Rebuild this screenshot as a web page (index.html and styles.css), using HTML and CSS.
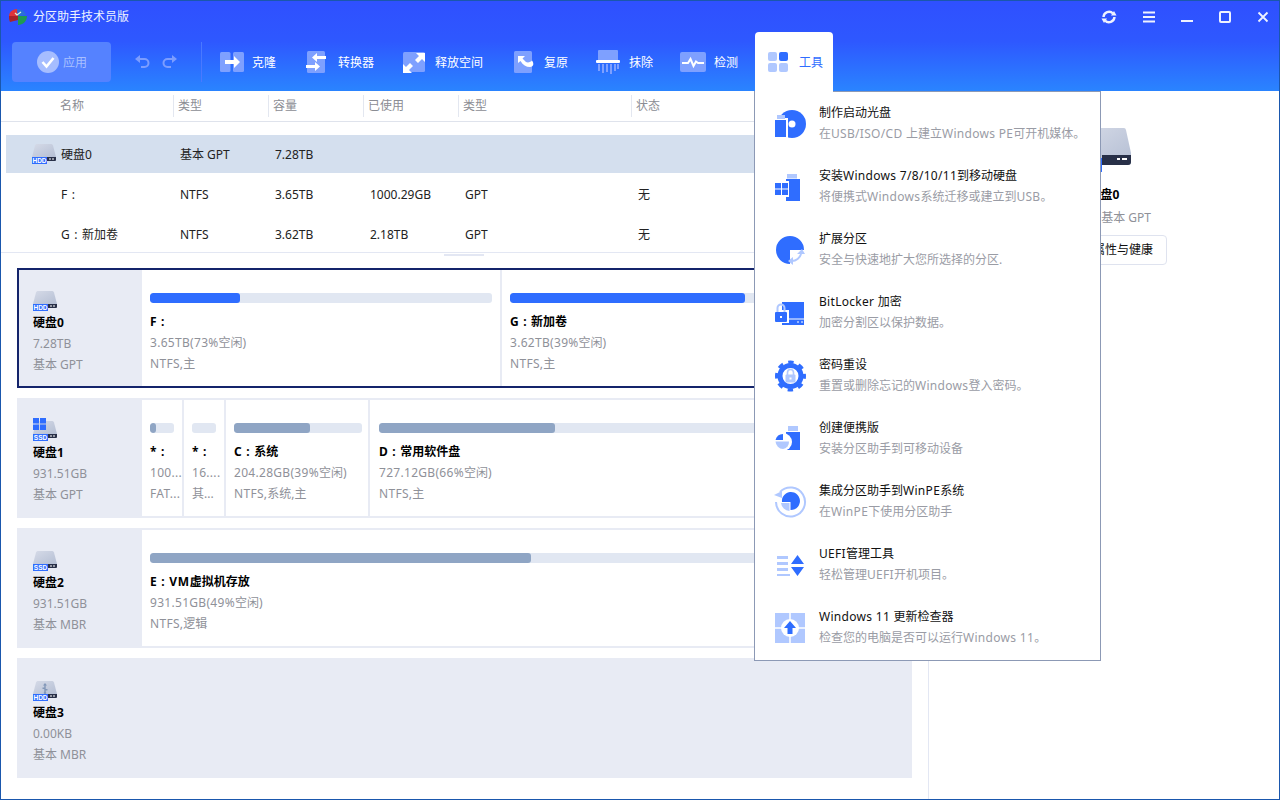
FILE: index.html
```html
<!DOCTYPE html>
<html lang="zh">
<head>
<meta charset="utf-8">
<title>分区助手技术员版</title>
<link rel="stylesheet" href="styles.css">
</head>
<body>
<svg class="defs" width="0" height="0">
  <defs>
    <linearGradient id="dg" x1="0" y1="0" x2="1" y2="1"><stop offset="0" stop-color="#d6dbe8"/><stop offset="1" stop-color="#b4bed3"/></linearGradient>
    <symbol id="body" viewBox="0 0 24 20">
      <path d="M4.500 0H19.500Q20.500 0 21 1.500L24 13H0L3 1.500Q3.500 0 4.500 0Z" fill="url(#dg)"/>
      <path d="M14 13H24V16Q24 17 23 17H14Z" fill="#283048"/>
      <rect x="17" y="14.500" width="2" height="1" fill="#fff"/>
      <rect x="20" y="14.500" width="2" height="1" fill="#fff"/>
      <rect x="0" y="13" width="15" height="7" fill="#2f6dff"/>
    </symbol>
  </defs>
</svg>
<div class="app">
  <header class="top">
    <div class="titlebar">
      <svg class="logo" width="20" height="18" viewBox="0 0 20 18"><path d="M1 8C1 4 5 1 9 1L10 8Z" fill="#e0353a"/><path d="M9 1C13 1 17 3 18 7L10 8Z" fill="#2a6fd8"/><path d="M1 8L10 8V12L2 14C1 12 1 10 1 8Z" fill="#a8242a"/><path d="M10 8H19C19 13 15 17 10 17Z" fill="#1f9a52"/><path d="M7 5L9 7L13 4" fill="none" stroke="#d8f5d8" stroke-width="1.200"/></svg>
      <span class="apptitle">分区助手技术员版</span>
      <div class="winctl">
        <svg width="16" height="16" viewBox="0 0 16 16"><path d="M2.500 8A5.500 5.500 0 0 1 12 4.500" fill="none" stroke="#eef2ff" stroke-width="2.400"/><path d="M10 6.500H15.500L13 2Z" fill="#eef2ff"/><path d="M13.500 8A5.500 5.500 0 0 1 4 11.500" fill="none" stroke="#eef2ff" stroke-width="2.400"/><path d="M6 9.500H.5L3 14Z" fill="#eef2ff"/></svg>
        <svg width="12" height="12" viewBox="0 0 12 12"><path d="M0 1.500H12M0 6H12M0 10.500H12" stroke="#eef2ff" stroke-width="2"/></svg>
        <svg width="12" height="12" viewBox="0 0 12 12"><path d="M0 10H12" stroke="#eef2ff" stroke-width="2"/></svg>
        <svg width="12" height="12" viewBox="0 0 12 12"><rect x="1" y="1" width="10" height="10" rx="1" fill="none" stroke="#eef2ff" stroke-width="2"/></svg>
        <svg width="12" height="12" viewBox="0 0 12 12"><path d="M1.500 1.500L10.500 10.500M10.500 1.500L1.500 10.500" stroke="#eef2ff" stroke-width="1.800"/></svg>
      </div>
    </div>
    <div class="toolbar">
      <div class="apply">
        <svg width="22" height="22" viewBox="0 0 22 22"><circle cx="11" cy="11" r="11" fill="#a6bdff"/><path d="M5.500 11L9.500 15.500L16.500 7" fill="none" stroke="#fff" stroke-width="2.600"/></svg>
        <span>应用</span>
      </div>
      <div class="undo">
        <svg width="15" height="14" viewBox="0 0 15 14"><path d="M3 4H9.500A4 4 0 0 1 9.500 12H6" fill="none" stroke="#7c9dff" stroke-width="2"/><path d="M5 0V8L0 4Z" fill="#7c9dff"/></svg>
        <svg width="15" height="14" viewBox="0 0 15 14"><path d="M12 4H5.500A4 4 0 0 0 5.500 12H9" fill="none" stroke="#7c9dff" stroke-width="2"/><path d="M10 0V8L15 4Z" fill="#7c9dff"/></svg>
      </div>
      <div class="vsep"></div>
      <div class="tools">
        <div class="tool">
          <svg width="24" height="22" viewBox="0 0 24 22"><rect x="0" y="1" width="10.500" height="20" rx="1.500" fill="#7ea0ff"/><rect x="13" y="1" width="11" height="20" rx="1.500" fill="#7ea0ff"/><path d="M5 9H14V5L20 11L14 17V13H5Z" fill="#fff"/></svg>
          <span>克隆</span>
        </div>
        <div class="tool">
          <svg width="24" height="24" viewBox="0 0 24 24"><rect x="1" y="1" width="18" height="22" rx="1.500" fill="#7ea0ff"/><path d="M20 6H11V3L6 7.500L11 12V9H20Z" fill="#fff"/><path d="M0 18H9V21L14 16.500L9 12V15H0Z" fill="#fff"/></svg>
          <span>转换器</span>
        </div>
        <div class="tool">
          <svg width="24" height="24" viewBox="1 0 24 24"><rect x="1" y="2" width="22" height="20" rx="1.500" fill="#7ea0ff"/><path d="M14 3H23V12L20 9L16 13L13 10L17 6Z" fill="#fff"/><path d="M1 23V14L4 17L8 13L11 16L7 20L10 23Z" fill="#fff"/></svg>
          <span>释放空间</span>
        </div>
        <div class="tool">
          <svg width="24" height="24" viewBox="0 0 24 24"><rect x="2" y="1" width="18" height="22" rx="1.500" fill="#7ea0ff"/><path d="M6 6H13L10.500 8.500L14 12C16 13 19 12 20 10.500C22 13 22 17 18 17C14 17 11 15 8.500 11L6 13Z" fill="#fff"/></svg>
          <span>复原</span>
        </div>
        <div class="tool">
          <svg width="24" height="24" viewBox="1 0 24 24"><path d="M2 1Q2 0 3 0H21Q22 0 22 1V10H2Z" fill="#7ea0ff"/><rect x="0" y="10" width="24" height="3" rx="1" fill="#fff"/><path d="M3 14V21M7 14V23M11 14V22M15 14V24M19 14V21M22 14V19" stroke="#7ea0ff" stroke-width="2"/></svg>
          <span>抹除</span>
        </div>
        <div class="tool">
          <svg width="26" height="20" viewBox="0 0 26 20"><rect x="0" y="0" width="26" height="20" rx="2" fill="#7ea0ff"/><path d="M2 11H8L10.500 7L13.500 14L16 9.500L18 11H24" fill="none" stroke="#fff" stroke-width="2"/></svg>
          <span>检测</span>
        </div>
      </div>
      <div class="tab">
        <svg width="20" height="20" viewBox="0 0 20 20"><rect width="9" height="9" rx="2" fill="#b0c8ff"/><rect x="11" width="9" height="9" rx="2" fill="#2f6dff"/><rect y="11" width="9" height="9" rx="2" fill="#b0c8ff"/><rect x="11" y="11" width="9" height="9" rx="2" fill="#b0c8ff"/></svg>
        <span>工具</span>
      </div>
    </div>
  </header>

  <div class="body">
    <main class="left">
      <div class="thead">
        <div class="th first">名称</div>
        <div class="th">类型</div>
        <div class="th">容量</div>
        <div class="th">已使用</div>
        <div class="th">类型</div>
        <div class="th">状态</div>
      </div>
      <div class="tbody">
        <div class="tr sel">
          <div class="td name disk"><svg class="dicon" width="24" height="20"><use href="#body"/><text x="7.500" y="19" class="badge">HDD</text></svg>硬盘0</div>
          <div class="td">基本 GPT</div><div class="td">7.28TB</div><div class="td"></div><div class="td"></div><div class="td"></div>
        </div>
        <div class="tr">
          <div class="td name"><span class="lsb">F :</span></div>
          <div class="td">NTFS</div><div class="td">3.65TB</div><div class="td">1000.29GB</div><div class="td">GPT</div><div class="td">无</div>
        </div>
        <div class="tr">
          <div class="td name"><span class="lsb">G : </span>新加卷</div>
          <div class="td">NTFS</div><div class="td">3.62TB</div><div class="td">2.18TB</div><div class="td">GPT</div><div class="td">无</div>
        </div>
      </div>
      <div class="handle"></div>
      <div class="cards">
        <section class="card active">
          <div class="dinfo">
            <svg class="dicon" width="24" height="20"><use href="#body"/><text x="7.500" y="19" class="badge">HDD</text></svg>
            <div class="dname">硬盘0</div><div class="muted">7.28TB</div><div class="muted">基本 GPT</div>
          </div>
          <div class="part w359">
            <div class="track"><div class="fill blue" style="width:26.300%"></div></div>
            <div class="pname"><span class="lsb">F :</span></div><div class="muted"><span class="ls">3.65TB(73%</span>空闲)</div><div class="muted"><span class="ls">NTFS,</span>主</div>
          </div>
          <div class="part grow">
            <div class="track"><div class="fill blue" style="width:60%"></div></div>
            <div class="pname"><span class="lsb">G : </span>新加卷</div><div class="muted"><span class="ls">3.62TB(39%</span>空闲)</div><div class="muted"><span class="ls">NTFS,</span>主</div>
          </div>
        </section>
        <section class="card">
          <div class="dinfo">
            <span class="iconwrap">
              <svg class="dicon" width="24" height="20"><use href="#body"/><text x="7.500" y="19" class="badge">SSD</text></svg>
              <svg class="winbadge" width="13" height="12" viewBox="0 0 13 12"><path d="M0 0H6V5.500H0ZM7 0H13V5.500H7ZM0 6.500H6V12H0ZM7 6.500H13V12H7Z" fill="#2f6dff"/></svg>
            </span>
            <div class="dname">硬盘1</div><div class="muted">931.51GB</div><div class="muted">基本 GPT</div>
          </div>
          <div class="part w40">
            <div class="track"><div class="fill gray" style="width:25%"></div></div>
            <div class="pname"><span class="lsb">* :</span></div><div class="muted"><span class="ls">100...</span></div><div class="muted"><span class="ls">FAT...</span></div>
          </div>
          <div class="part w40">
            <div class="track"></div>
            <div class="pname"><span class="lsb">* :</span></div><div class="muted"><span class="ls">16....</span></div><div class="muted">其...</div>
          </div>
          <div class="part w142">
            <div class="track"><div class="fill gray" style="width:59.500%"></div></div>
            <div class="pname"><span class="lsb">C : </span>系统</div><div class="muted"><span class="ls">204.28GB(39%</span>空闲)</div><div class="muted"><span class="ls">NTFS,</span>系统,主</div>
          </div>
          <div class="part grow wide">
            <div class="track"><div class="fill gray" style="width:33.700%"></div></div>
            <div class="pname"><span class="lsb">D : </span>常用软件盘</div><div class="muted"><span class="ls">727.12GB(66%</span>空闲)</div><div class="muted"><span class="ls">NTFS,</span>主</div>
          </div>
        </section>
        <section class="card">
          <div class="dinfo">
            <svg class="dicon" width="24" height="20"><use href="#body"/><text x="7.500" y="19" class="badge">SSD</text></svg>
            <div class="dname">硬盘2</div><div class="muted">931.51GB</div><div class="muted">基本 MBR</div>
          </div>
          <div class="part grow">
            <div class="track"><div class="fill gray" style="width:50.700%"></div></div>
            <div class="pname"><span class="lsb">E : VM</span>虚拟机存放</div><div class="muted"><span class="ls">931.51GB(49%</span>空闲)</div><div class="muted"><span class="ls">NTFS,</span>逻辑</div>
          </div>
        </section>
        <section class="card">
          <div class="dinfo">
            <span class="iconwrap">
              <svg class="dicon" width="24" height="20"><use href="#body"/><text x="7.500" y="19" class="badge">HDD</text></svg>
              <svg class="usbbadge" width="6" height="11" viewBox="0 0 6 11"><path d="M3 0L5 2.500H3.700V9.500H2.300V2.500H1ZM.5 4.500H2.300V6H.5ZM3.700 6H5.500V7.500H3.700ZM3 8.500A1.200 1.200 0 1 1 3 11A1.200 1.200 0 1 1 3 8.500Z" fill="#8297b8"/></svg>
            </span>
            <div class="dname">硬盘3</div><div class="muted">0.00KB</div><div class="muted">基本 MBR</div>
          </div>
        </section>
      </div>
    </main>
    <aside class="right">
      <svg class="bigdisk" width="54" height="44" viewBox="0 0 54 44">
        <path d="M10 0H47Q48.500 0 49 2L54 25V34Q54 37 51 37H3Q0 37 0 34V25L5 2Q5.500 0 7 0Z" fill="url(#dg)"/>
        <path d="M25 27H54V34Q54 37 51 37H25Z" fill="#283048"/>
        <rect x="40" y="30" width="3" height="2" fill="#fff"/><rect x="45" y="30" width="5" height="2" fill="#fff"/>
        <rect x="0" y="30" width="25" height="14" fill="#2f6dff"/>
      </svg>
      <div class="rname">硬盘0</div>
      <div class="rmeta"><span>7.28TB</span><span>基本 GPT</span></div>
      <div class="rbtn">属性与健康</div>
    </aside>
  </div>

  <nav class="menu">
    <div class="item">
      <svg class="micon" width="32" height="32" viewBox="0 0 32 32"><circle cx="19" cy="16" r="14" fill="#2f6dff"/><circle cx="19" cy="16" r="3.500" fill="#fff"/><rect x="1" y="10" width="14" height="20" fill="#fff"/><rect x="2" y="12" width="11" height="17" fill="#2f6dff"/><rect x="4" y="7" width="8" height="4" fill="#b0c8ff"/></svg>
      <div><div class="mt">制作启动光盘</div><div class="md">在<span class="ls">USB/ISO/CD </span>上建立<span class="ls">Windows PE</span>可开机媒体。</div></div>
    </div>
    <div class="item">
      <svg class="micon" width="32" height="32" viewBox="0 0 32 32"><rect x="14" y="3" width="10" height="4.500" fill="#b0c8ff"/><rect x="13" y="8" width="14" height="22" fill="#2f6dff"/><rect x="1" y="10" width="15" height="16" fill="#fff"/><path d="M2 12H8V17.500H2ZM9 12H15V17.500H9ZM2 18.500H8V24H2ZM9 18.500H15V24H9Z" fill="#2f6dff"/></svg>
      <div><div class="mt">安装<span class="ls">Windows 7/8/10/11</span>到移动硬盘</div><div class="md">将便携式<span class="ls">Windows</span>系统迁移或建立到<span class="ls">USB</span>。</div></div>
    </div>
    <div class="item">
      <svg class="micon" width="32" height="32" viewBox="0 0 32 32"><path d="M17 2A14 14 0 1 0 17 30V16H31A14 14 0 0 0 17 2Z" fill="#2f6dff"/><path d="M19 27C23 27 27 24 28 20" fill="none" stroke="#b0c8ff" stroke-width="2"/><path d="M24 20H32L29 15ZM15 27L20 23V31Z" fill="#b0c8ff"/></svg>
      <div><div class="mt">扩展分区</div><div class="md">安全与快速地扩大您所选择的分区.</div></div>
    </div>
    <div class="item">
      <svg class="micon" width="32" height="32" viewBox="0 0 32 32"><path d="M9 5H31V28H9Z" fill="#2f6dff"/><path d="M9 22H31" stroke="#fff"/><path d="M24 25H26M28 25H30" stroke="#fff"/><rect x="1" y="13" width="15" height="13" fill="#fff"/><rect x="2" y="15" width="12" height="10" rx="1" fill="#2f6dff"/><path d="M4.500 15V11A3.500 3.500 0 0 1 11.500 11V15" fill="none" stroke="#b0c8ff" stroke-width="2"/><rect x="7" y="19" width="2" height="2" fill="#fff"/></svg>
      <div><div class="mt"><span class="ls">BitLocker </span>加密</div><div class="md">加密分割区以保护数据。</div></div>
    </div>
    <div class="item">
      <svg class="micon" width="32" height="32" viewBox="0 0 32 32"><circle cx="17.500" cy="16" r="10.500" fill="none" stroke="#2f6dff" stroke-width="5"/><circle cx="17.500" cy="16" r="14" fill="none" stroke="#2f6dff" stroke-width="3" stroke-dasharray="5.500 5.496" stroke-dashoffset="2.750"/><rect x="12.500" y="14.500" width="10" height="8" rx="1" fill="#b0c8ff"/><path d="M14.500 15V12.500A3 3 0 0 1 20.500 12.500V15" fill="none" stroke="#b0c8ff" stroke-width="1.600"/><rect x="16.500" y="17.500" width="2" height="2" fill="#fff"/></svg>
      <div><div class="mt">密码重设</div><div class="md">重置或删除忘记的<span class="ls">Windows</span>登入密码。</div></div>
    </div>
    <div class="item">
      <svg class="micon" width="32" height="32" viewBox="0 0 32 32"><rect x="15" y="3" width="10" height="5" fill="#b0c8ff"/><rect x="13" y="9" width="14" height="18" fill="#2f6dff"/><circle cx="10" cy="19" r="9" fill="#fff"/><path d="M10 11A8 8 0 0 0 2.500 17H10Z" fill="#2f6dff"/><path d="M2.500 18.500A8 8 0 0 0 10 26A7 7 0 0 0 16 18.500Z" fill="#b0c8ff"/></svg>
      <div><div class="mt">创建便携版</div><div class="md">安装分区助手到可移动设备</div></div>
    </div>
    <div class="item">
      <svg class="micon" width="32" height="32" viewBox="0 0 32 32"><path d="M7 6A14.500 14.500 0 1 1 3 16" fill="none" stroke="#b0c8ff" stroke-width="2"/><path d="M1 9L9 5V12Z" fill="#b0c8ff"/><path d="M13 7.500A9 9 0 1 1 17.500 24V16H9A9 9 0 0 1 13 7.500Z" fill="#2f6dff"/><path d="M8 17H16.500V25A9 9 0 0 1 8 17Z" fill="#b0c8ff"/></svg>
      <div><div class="mt">集成分区助手到<span class="ls">WinPE</span>系统</div><div class="md">在<span class="ls">WinPE</span>下使用分区助手</div></div>
    </div>
    <div class="item">
      <svg class="micon" width="32" height="32" viewBox="0 0 32 32"><path d="M4 7H15V10H4ZM4 13H15V16H4ZM4 19H15V22H4ZM4 25H17V27H4Z" fill="#b0c8ff"/><path d="M18 15L24.500 6L31 15ZM18 18H31L24.500 27Z" fill="#2f6dff"/></svg>
      <div><div class="mt"><span class="ls">UEFI</span>管理工具</div><div class="md">轻松管理<span class="ls">UEFI</span>开机项目。</div></div>
    </div>
    <div class="item">
      <svg class="micon" width="32" height="32" viewBox="0 0 32 32"><rect x="2" y="1" width="30" height="30" fill="#b0c8ff"/><path d="M17 1V31M2 16H32" stroke="#fff" stroke-width="1.500"/><circle cx="17" cy="16" r="9" fill="#fff"/><path d="M17 9L23 16H19.500V22H14.500V16H11Z" fill="#2f6dff"/></svg>
      <div><div class="mt"><span class="ls">Windows 11 </span>更新检查器</div><div class="md">检查您的电脑是否可以运行<span class="ls">Windows 11</span>。</div></div>
    </div>
  </nav>
</div>
</body>
</html>
```

FILE: styles.css
```css
* { box-sizing: border-box; }
html, body { margin: 0; height: 100%; overflow: hidden; background: #fff; }
body {
  font-family: "Noto Sans", "Noto Sans CJK SC", sans-serif;
  font-size: 12px;
  line-height: 21px;
  color: #222;
}
.defs { position: absolute; }
.ls { letter-spacing: .3px; }
.lsb { letter-spacing: .7px; }
.app {
  position: relative;
  width: 1280px;
  height: 800px;
  border: 1px solid #1a57ad;
  display: flex;
  flex-direction: column;
  overflow: hidden;
}

/* header */
.top {
  height: 90px;
  flex: none;
  background: linear-gradient(180deg, #2f50ff 0%, #2e58ff 45%, #2a84ff 100%);
  color: #fff;
}
.titlebar {
  height: 31px;
  display: flex;
  align-items: center;
  padding-left: 7px;
}
.logo { margin-right: 5px; }
.apptitle { color: #eef3ff; }
.winctl {
  margin-left: auto;
  display: flex;
  align-items: center;
  gap: 26px;
  padding-right: 10px;
}
.toolbar {
  height: 59px;
  display: flex;
  align-items: flex-start;
  padding: 10px 0 0 11px;
}
.apply {
  width: 99px;
  height: 40px;
  background: #5582ff;
  border-radius: 4px;
  display: flex;
  align-items: center;
  padding-left: 25px;
  gap: 4px;
  color: #a9c0ff;
}
.undo {
  height: 40px;
  display: flex;
  align-items: center;
  gap: 12px;
  margin-left: 24px;
}
.vsep {
  width: 1px;
  height: 40px;
  margin: 0 18px 0 24px;
  background: #4a79ff;
}
.tools {
  display: flex;
  gap: 29px;
}
.tool {
  height: 40px;
  display: flex;
  align-items: center;
  gap: 8px;
}
.tool svg { overflow: visible; }
.tool:first-child { margin-right: 1px; }
.tool:last-child { margin-left: -2px; }
.tab {
  position: relative;
  z-index: 3;
  height: 60px;
  width: 78px;
  margin: -10px 0 0 17px;
  background: #fff;
  border-radius: 4px 4px 0 0;
  display: flex;
  align-items: center;
  padding-left: 13px;
  gap: 11px;
  color: #2f6dff;
}

/* body */
.body { flex: 1; display: flex; min-height: 0; }
.left { width: 928px; flex: none; border-right: 1px solid #e3e7f3; }
.right {
  flex: 1;
  display: flex;
  flex-direction: column;
  align-items: center;
  padding-top: 37px;
}
.thead, .tr {
  display: grid;
  grid-template-columns: 167px 95px 95px 95px 173px 1fr;
}
.thead {
  height: 31px;
  padding: 4px 0 4px 5px;
  border-bottom: 1px solid #dfe3ec;
  align-items: stretch;
}
.th {
  color: #8b8d94;
  border-left: 1px solid #e3e7f0;
  padding-left: 4px;
  height: 22px;
}
.th.first { border-left: 0; padding-left: 54px; }
.tbody {
  height: 131px;
  padding-top: 13px;
  display: flex;
  flex-direction: column;
  gap: 2px;
  overflow: hidden;
  border-bottom: 1px solid #e3e7f3;
}
.tr {
  flex: none;
  height: 38px;
  margin-left: 5px;
  align-items: center;
}
.tr.sel { background: #d4dfee; }
.td { padding-left: 7px; white-space: nowrap; }
.td.name { padding-left: 55px; }
.td.disk { padding-left: 26px; display: flex; align-items: center; gap: 5px; }
.dicon { display: block; overflow: visible; }
.badge {
  font-family: "Liberation Sans", sans-serif;
  font-size: 6.500px;
  font-weight: 700;
  fill: #fff;
  text-anchor: middle;
}
.handle {
  width: 40px;
  height: 2px;
  margin: 1px 0 0 443px;
  background: #e3e7f3;
}
.cards {
  margin: 12px 0 0 16px;
  width: 895px;
  display: flex;
  flex-direction: column;
  gap: 10px;
}
.card {
  height: 120px;
  border: 2px solid #e8ebf4;
  background: #e8ebf4;
  display: flex;
  gap: 2px;
}
.card.active { border-color: #14246b; }
.dinfo {
  width: 121px;
  flex: none;
  padding: 21px 0 0 14px;
}
.dinfo .dicon { margin-bottom: 1px; }
.iconwrap { position: relative; display: block; width: 24px; }
.winbadge { position: absolute; left: 0; top: -3px; }
.usbbadge { position: absolute; left: 9px; top: 2px; }
.dname, .pname { font-weight: 700; color: #000; white-space: nowrap; }
.muted { color: #8f9199; white-space: nowrap; }
.part {
  background: #fff;
  padding: 23px 8px 0;
  overflow: hidden;
}
.part.w359 { width: 358px; flex: none; }
.part.w40 { width: 40px; flex: none; padding-right: 0; }
.part.w40 .track { width: 24px; }
.part.w142 { width: 142px; flex: none; padding-right: 6px; }
.part.grow { flex: 1; }
.part.wide { padding-left: 9px; }
.track {
  height: 10px;
  border-radius: 3px;
  background: #e1e7f2;
  margin-bottom: 8px;
  overflow: hidden;
}
.fill { height: 100%; border-radius: 3px; }
.fill.blue { background: #2f6dff; }
.fill.gray { background: #8fa5c4; }

/* right panel */
.bigdisk { display: block; flex: none; }
.rname { margin-top: 12px; font-weight: 700; color: #000; }
.rmeta {
  display: flex;
  gap: 6px;
  margin-top: 1px;
  padding-top: 1px;
  color: #8f9199;
}
.rbtn {
  margin-top: 7px;
  width: 126px;
  height: 30px;
  border: 1px solid #dfe3ef;
  border-radius: 4px;
  text-align: right;
  padding-right: 13px;
  line-height: 28px;
  color: #111;
}

/* dropdown menu */
.menu {
  position: absolute;
  z-index: 2;
  left: 753px;
  top: 90px;
  width: 347px;
  height: 570px;
  background: #fff;
  border: 1px solid #8c99b5;
}
.item {
  height: 63px;
  display: flex;
  align-items: center;
  padding-left: 18px;
  gap: 14px;
}
.item > div { margin-bottom: 2px; }
.micon { flex: none; display: block; overflow: visible; }
.mt { color: #111; white-space: nowrap; }
.md { color: #9a9ca5; white-space: nowrap; }
```
